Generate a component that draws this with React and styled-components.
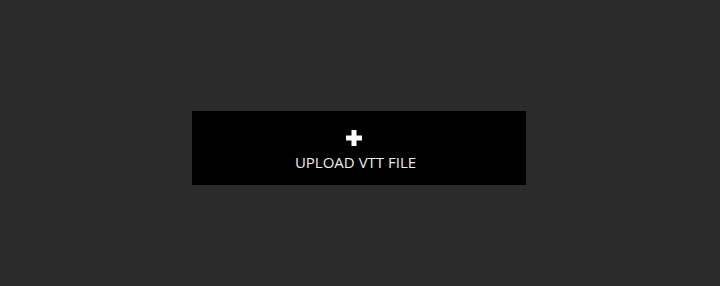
import React from "react";
import styled, { createGlobalStyle } from "styled-components";

const GlobalStyle = createGlobalStyle`
  html, body {
    margin: 0;
    padding: 0;
    background: #2b2b2b;
  }
  body {
    font-family: "Open Sans", "Liberation Sans", sans-serif;
  }
`;

const Page = styled.div`
  height: 286px;
  display: flex;
  align-items: center;
  justify-content: center;
  padding-top: 10px;
  box-sizing: border-box;
`;

const UploadBox = styled.label`
  width: 334px;
  height: 74px;
  margin-left: -2px;
  padding: 19px 7px 0 0;
  background: #000000;
  display: flex;
  flex-direction: column;
  align-items: center;
  box-sizing: border-box;
  cursor: pointer;
`;

const PlusIcon = styled.svg`
  width: 16px;
  height: 16px;
  margin-left: -3px;
  display: block;
`;

const Label = styled.span`
  margin-top: 7px;
  color: #ececec;
  font-size: 15px;
  line-height: 19px;
`;

export default function App() {
  return (
    <>
      <GlobalStyle />
      <Page>
        <UploadBox>
          <PlusIcon viewBox="0 0 16 16">
            <path d="M5.5 0h5v5.5H16v5h-5.5V16h-5v-5.5H0v-5h5.5z" fill="#ffffff" />
          </PlusIcon>
          <Label>UPLOAD VTT FILE</Label>
        </UploadBox>
      </Page>
    </>
  );
}
